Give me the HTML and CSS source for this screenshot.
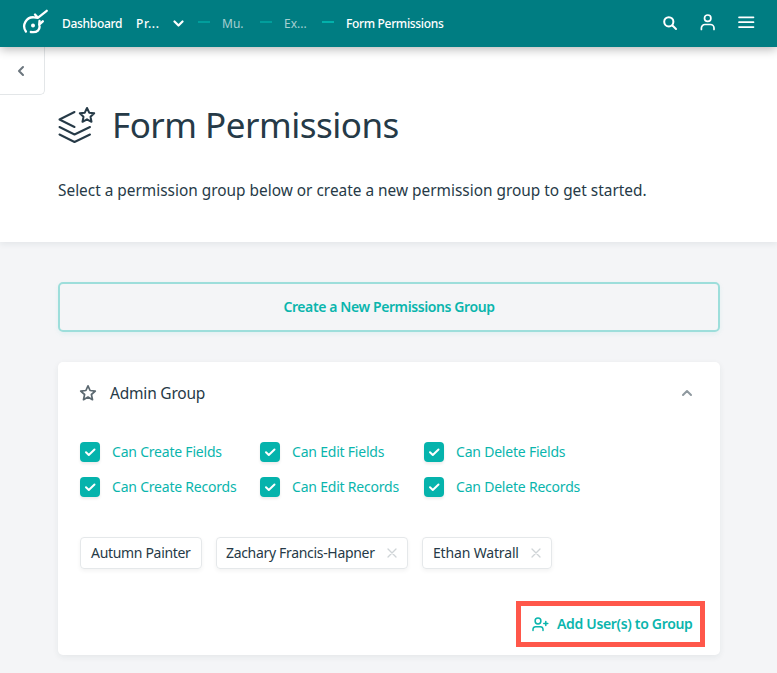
FILE: index.html
```html
<!DOCTYPE html>
<html lang="en">
<head>
<meta charset="utf-8">
<title>Form Permissions</title>
<link rel="stylesheet" href="styles.css">
</head>
<body>
<header class="topbar">
  <svg class="logo" width="28" height="28" viewBox="0 0 28 28" fill="none" stroke="#fff" stroke-width="2.300" stroke-linecap="round" stroke-linejoin="round">
    <path d="M3.900 22.500A9 9 0 0 1 12 8.300L15.800 8.800 24.700 1.800M13 5.500l2.500 2.800M20.800 12.300l-3.600 3.300c1.500 5-2 8.500-8.400 7.400M17.200 15.600l.3-3.600"/>
    <circle cx="11" cy="16.500" r="2" fill="#fff" stroke="none"/>
  </svg>
  <nav class="crumbs">
    <span class="crumb dash-link">Dashboard</span>
    <span class="crumb project">Pr...</span>
    <svg class="caret" width="12" height="8" viewBox="0 0 12 8" fill="none" stroke="#fff" stroke-width="2.200" stroke-linecap="round" stroke-linejoin="round"><path d="M1.500 1.500l4 4 4-4"/></svg>
    <i class="sep faded"></i>
    <span class="crumb muted mu">Mu.</span>
    <i class="sep faded"></i>
    <span class="crumb muted ex">Ex...</span>
    <i class="sep"></i>
    <span class="crumb current">Form Permissions</span>
  </nav>
  <div class="tools">
    <svg width="16" height="16" viewBox="0 0 16 16" fill="none" stroke="#fff" stroke-width="2" stroke-linecap="round"><circle cx="6.800" cy="6.800" r="4.600"/><path d="M10.500 10.500l3.500 3.500"/></svg>
    <svg width="16" height="18" viewBox="0 0 16 18" fill="none" stroke="#fff" stroke-width="1.700" stroke-linecap="round"><circle cx="7.700" cy="4.200" r="3.200"/><path d="M1.400 15.500v-1.500a3.500 3.500 0 0 1 3.500-3.500h5.600a3.500 3.500 0 0 1 3.500 3.500v1.500"/></svg>
    <svg width="18" height="14" viewBox="0 0 18 14" fill="none" stroke="#fff" stroke-width="1.700" stroke-linecap="round"><path d="M2 1.300h14.500M2 6.200h14.500M2 11.100h14.500"/></svg>
  </div>
</header>
<section class="hero">
  <button class="back" aria-label="Back"><svg width="8" height="12" viewBox="0 0 8 12" fill="none" stroke="#6b757d" stroke-width="2" stroke-linecap="round" stroke-linejoin="round"><path d="M6 2L2 6l4 4"/></svg></button>
  <div class="heading">
    <svg width="38" height="38" viewBox="0 0 38 38" fill="none" stroke="#263a47" stroke-width="2" stroke-linecap="round" stroke-linejoin="round">
      <path d="M16.500 6L1.500 13.500l15 7.500M1.500 21l15 7.500L32 21M1.500 28.500l15 7.500L32 28.500"/>
      <path d="M29 2l2.200 4.700 5 .6-3.700 3.500 1 5-4.500-2.500-4.500 2.500 1-5-3.700-3.500 5-.6z"/>
    </svg>
    <h1>Form Permissions</h1>
  </div>
  <p class="intro">Select a permission group below or create a new permission group to get started.</p>
</section>
<main>
  <button class="create">Create a New Permissions Group</button>
  <section class="card">
    <div class="card-head">
      <svg width="18" height="18" viewBox="0 0 18 18" fill="none" stroke="#5b6870" stroke-width="1.700" stroke-linejoin="round"><path d="M9 1.800l2.100 4.700 5.200.6-3.900 3.400 1.100 5.200L9 13l-4.500 2.700 1.100-5.200L1.700 7.100l5.200-.6z"/></svg>
      <h2>Admin Group</h2>
      <svg class="collapse" width="12" height="8" viewBox="0 0 12 8" fill="none" stroke="#8f999f" stroke-width="2" stroke-linecap="round" stroke-linejoin="round"><path d="M2 6l4-4 4 4"/></svg>
    </div>
    <div class="perms">
      <label><span class="box"><svg width="20" height="20" viewBox="0 0 20 20"><path d="M6 10.300l2.800 2.700L14.500 7.500"/></svg></span><span class="name">Can Create Fields</span></label>
      <label><span class="box"><svg width="20" height="20" viewBox="0 0 20 20"><path d="M6 10.300l2.800 2.700L14.500 7.500"/></svg></span><span class="name">Can Edit Fields</span></label>
      <label><span class="box"><svg width="20" height="20" viewBox="0 0 20 20"><path d="M6 10.300l2.800 2.700L14.500 7.500"/></svg></span><span class="name">Can Delete Fields</span></label>
      <label><span class="box"><svg width="20" height="20" viewBox="0 0 20 20"><path d="M6 10.300l2.800 2.700L14.500 7.500"/></svg></span><span class="name">Can Create Records</span></label>
      <label><span class="box"><svg width="20" height="20" viewBox="0 0 20 20"><path d="M6 10.300l2.800 2.700L14.500 7.500"/></svg></span><span class="name">Can Edit Records</span></label>
      <label><span class="box"><svg width="20" height="20" viewBox="0 0 20 20"><path d="M6 10.300l2.800 2.700L14.500 7.500"/></svg></span><span class="name">Can Delete Records</span></label>
    </div>
    <div class="users">
      <span class="chip autumn"><span class="name">Autumn Painter</span></span>
      <span class="chip zachary"><span class="name">Zachary Francis-Hapner</span><svg width="10" height="10" viewBox="0 0 10 10"><path d="M1 1l8 8M9 1L1 9"/></svg></span>
      <span class="chip ethan"><span class="name">Ethan Watrall</span><svg width="10" height="10" viewBox="0 0 10 10"><path d="M1 1l8 8M9 1L1 9"/></svg></span>
    </div>
    <button class="add">
      <svg width="17" height="15" viewBox="0 0 17 15" fill="none" stroke="#0ab5ad" stroke-width="1.500" stroke-linecap="round"><circle cx="6" cy="4" r="2.900"/><path d="M1 13.500V12a2.600 2.600 0 0 1 2.600-2.300h4.800A2.600 2.600 0 0 1 11 12v1.500M11.800 6.500h4M13.800 4.500v4"/></svg>
      <span class="name">Add User(s) to Group</span>
    </button>
  </section>
</main>
</body>
</html>
```
FILE: styles.css
```css
* { box-sizing: border-box; }
body { margin: 0; background: #f4f5f7; color: #263a47; font-family: "Noto Sans", "Open Sans", sans-serif; }
button { font-family: inherit; margin: 0; padding: 0; background: none; border: 0; }
svg { display: block; flex: none; }
h1, h2, p { margin: 0; font-weight: 400; }
.name { padding-bottom: 2px; }

.topbar { position: relative; z-index: 2; height: 47px; display: flex; align-items: center; padding: 0 22px; background: #007d82; box-shadow: 0 2px 10px rgba(0, 0, 0, .3); }
.logo { margin: 0 12px 1px 0; }
.crumbs { display: flex; align-items: center; flex: 1; color: #fff; font-size: 12px; font-weight: 500; line-height: 18px; white-space: nowrap; }
.dash-link { width: 74px; letter-spacing: -.3px; }
.project { width: 37px; letter-spacing: .7px; }
.current { letter-spacing: -.33px; }
.caret { margin-right: 13px; }
.sep { width: 12px; height: 2px; margin: 0 12px 4px 0; background: #02b1ab; }
.sep.faded { opacity: .65; }
.muted { color: #a6cfd1; font-weight: 400; }
.mu, .ex { width: 38px; }
.tools { display: flex; align-items: center; gap: 21px; padding-bottom: 2px; }
.tools svg:first-child { margin-right: 1px; }

.hero { position: relative; height: 195px; padding: 0 58px; background: #fff; box-shadow: 0 2px 6px rgba(30, 50, 60, .08); }
.back { position: absolute; left: 0; top: 0; width: 45px; height: 48px; padding: 0 0 0 17px; border: solid #e3e6e8; border-width: 0 1px 1px 0; border-radius: 0 0 5px 0; }
.heading { display: flex; align-items: center; gap: 16px; padding-top: 53px; height: 103px; }
h1 { font-size: 35px; line-height: 48px; letter-spacing: -.5px; white-space: nowrap; }
.intro { margin-top: 29px; font-size: 15.4px; line-height: 24px; white-space: nowrap; }

main { padding: 40px 57px 18px 58px; }
.create { display: block; width: 662px; height: 50px; padding-bottom: 2px; border: 2px solid #9ddedb; border-radius: 5px; color: #0ab5ad; font-size: 14px; font-weight: 600; letter-spacing: -.4px; box-shadow: 0 2px 5px rgba(10, 181, 173, .08); }
.card { width: 662px; height: 293px; margin-top: 30px; padding: 0 22px; display: flex; flex-direction: column; background: #fff; border-radius: 5px; box-shadow: 0 2px 6px rgba(30, 50, 60, .07); }
.card-head { display: flex; align-items: center; padding: 17px 5px 0 0; height: 44px; }
.card-head svg:first-child { margin-left: -1px; }
h2 { margin-left: 13px; flex: 1; font-size: 15.5px; line-height: 24px; letter-spacing: -.2px; }
.perms { display: grid; grid-template-columns: 180px 164px 1fr; grid-auto-rows: 20px; row-gap: 15px; margin-top: 36px; color: #0ab5ad; font-size: 14px; letter-spacing: -.21px; }
.perms label { display: flex; align-items: center; gap: 12px; white-space: nowrap; }
.box { width: 20px; height: 20px; border-radius: 4px; background: #05b3ac; box-shadow: 0 2px 3px rgba(0, 0, 0, .08); }
.box path { fill: none; stroke: #fff; stroke-width: 2; stroke-linecap: round; stroke-linejoin: round; }
.users { display: flex; gap: 14px; margin-top: 40px; }
.chip { height: 32px; padding: 0 10px; display: flex; align-items: center; justify-content: space-between; border: 1px solid #e5e8ea; border-radius: 4px; font-size: 14px; letter-spacing: -.32px; white-space: nowrap; box-shadow: 0 2px 4px rgba(0, 0, 0, .05); }
.chip path { stroke: #cfd4d7; stroke-width: 1.300; stroke-linecap: round; }
.autumn { width: 122px; }
.zachary { width: 192px; padding-left: 9px; }
.ethan { width: 130px; letter-spacing: -.16px; }
.add { align-self: flex-end; display: flex; align-items: center; gap: 8px; width: 189px; height: 46px; margin: 32px -7px 0 0; padding-left: 11px; border: 5px solid #ff574a; color: #0ab5ad; font-size: 14px; font-weight: 600; letter-spacing: -.33px; white-space: nowrap; }
```
